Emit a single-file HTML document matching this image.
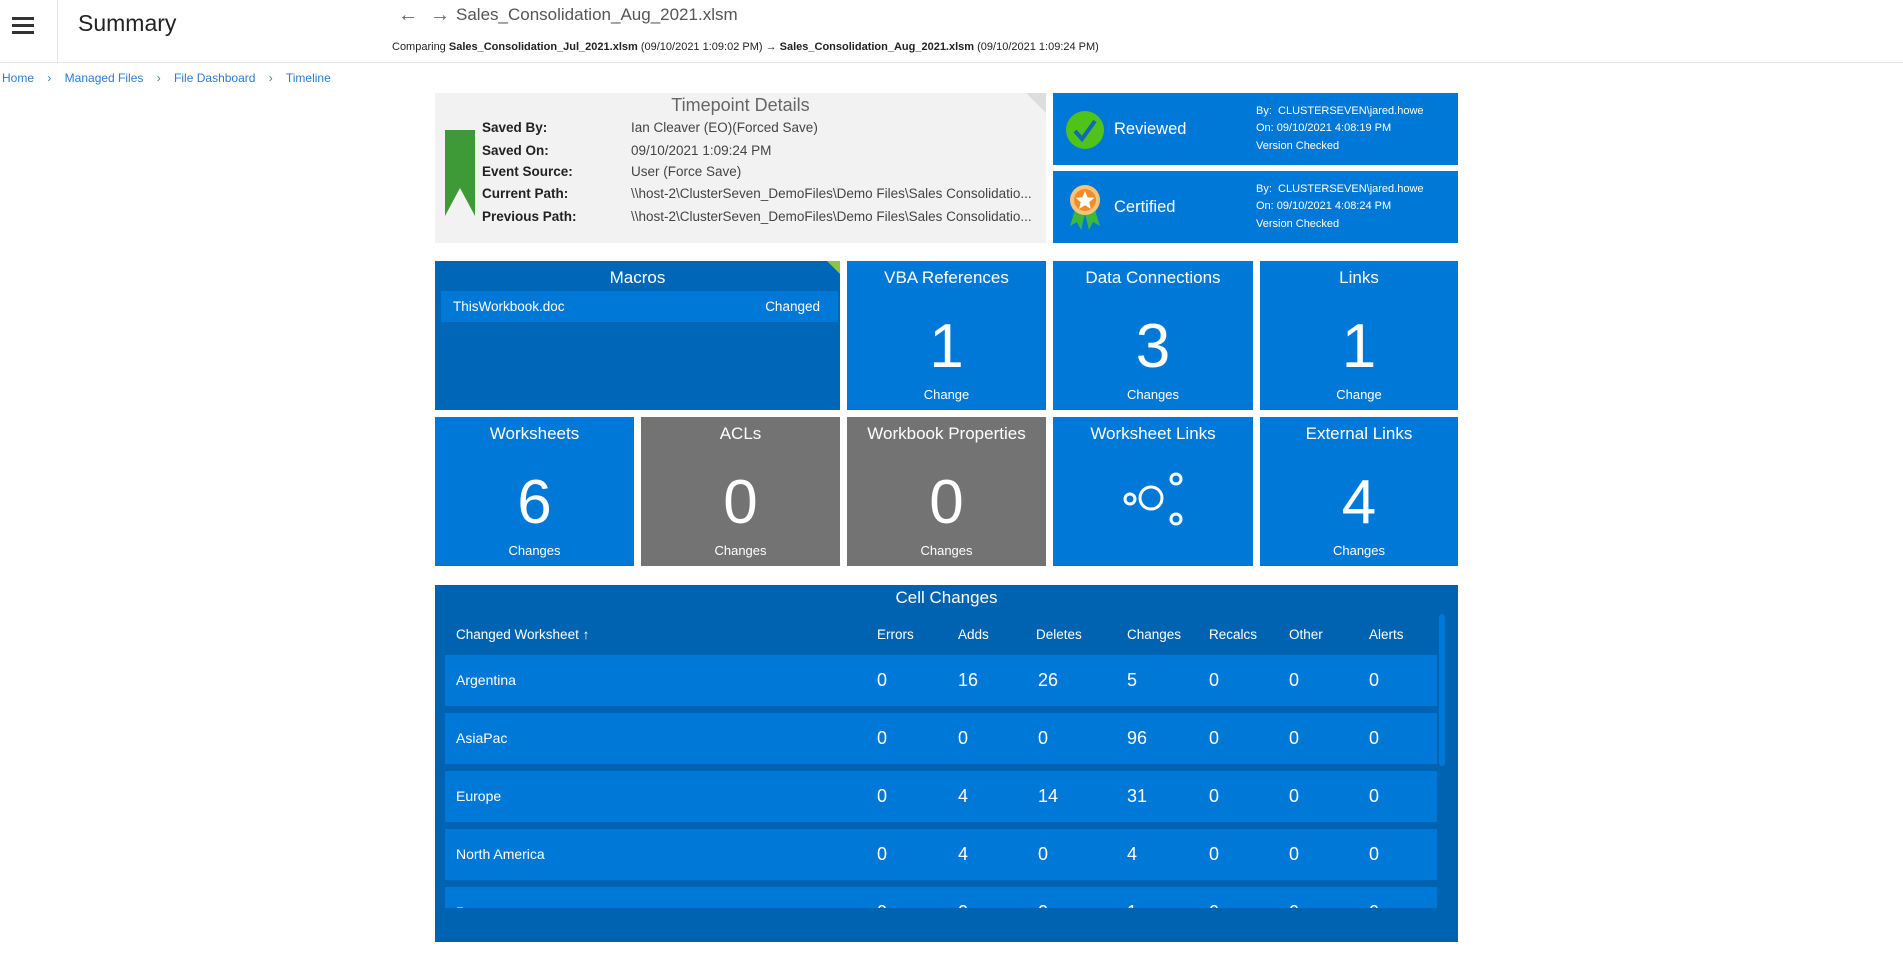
<!DOCTYPE html>
<html><head><meta charset="utf-8"><style>
*{margin:0;padding:0;box-sizing:border-box}
body{width:1903px;height:957px;background:#fff;font-family:"Liberation Sans",sans-serif;position:relative;overflow:hidden;color:#222}
.a{position:absolute}
.tile{position:absolute;background:#0078d7;color:#fff}
.tile .h{position:absolute;left:0;right:0;top:7px;text-align:center;font-size:17px}
.tile .n{position:absolute;left:0;right:0;top:50px;text-align:center;font-size:62px;font-weight:300}
.tile .c{position:absolute;left:0;right:0;bottom:8px;text-align:center;font-size:13px}
.row{position:absolute;left:445px;width:992px;height:51px;background:#0078d7;color:#fff;font-size:14px}
.row span{position:absolute;top:17px}
.row b{position:absolute;top:15px;font-weight:normal;font-size:18px}
.hd{position:absolute;top:627px;color:#fff;font-size:13.5px}
.lab{position:absolute;left:482px;font-weight:bold;font-size:13.5px;color:#222}
.val{position:absolute;left:631px;font-size:13.5px;color:#444;white-space:nowrap}
.sm{position:absolute;left:1256px;color:#fff;font-size:11px}
</style></head><body>
<div class="a" style="left:12px;top:17px;width:22px;height:3px;background:#333;box-shadow:0 7px 0 #333,0 14px 0 #333"></div>
<div class="a" style="left:57px;top:0;width:1px;height:62px;background:#e6e6e6"></div>
<div class="a" style="left:78px;top:10px;font-size:23px;color:#222">Summary</div>
<div class="a" style="left:398px;top:4px;font-size:20px;color:#666">&#8592;</div>
<div class="a" style="left:430px;top:4px;font-size:20px;color:#666">&#8594;</div>
<div class="a" style="left:456px;top:5px;font-size:17px;color:#555">Sales_Consolidation_Aug_2021.xlsm</div>
<div class="a" style="left:392px;top:41px;font-size:11px;color:#222;white-space:nowrap">Comparing <b>Sales_Consolidation_Jul_2021.xlsm</b> (09/10/2021 1:09:02 PM) &#8594; <b>Sales_Consolidation_Aug_2021.xlsm</b> (09/10/2021 1:09:24 PM)</div>
<div class="a" style="left:0;top:62px;width:1903px;height:1px;background:#e6e6e6"></div>
<div class="a" style="left:2px;top:71px;font-size:12px;color:#2b7cd3;white-space:pre">Home    &#8250;    Managed Files    &#8250;    File Dashboard    &#8250;    Timeline</div>
<div class="a" style="left:435px;top:93px;width:611px;height:150px;background:#f2f2f2"></div>
<div class="a" style="left:1026px;top:93px;width:0;height:0;border-left:20px solid transparent;border-top:20px solid #ddd"></div>
<div class="a" style="left:435px;top:95px;width:611px;text-align:center;font-size:18px;color:#666">Timepoint Details</div>
<svg class="a" style="left:445px;top:130px" width="30" height="86"><polygon points="0,0 30,0 30,86 15,58 0,86" fill="#3d9a37"/></svg>
<div class="lab" style="top:120px">Saved By:</div><div class="val" style="top:120px">Ian Cleaver (EO)(Forced Save)</div>
<div class="lab" style="top:143px">Saved On:</div><div class="val" style="top:143px">09/10/2021 1:09:24 PM</div>
<div class="lab" style="top:164px">Event Source:</div><div class="val" style="top:164px">User (Force Save)</div>
<div class="lab" style="top:186px">Current Path:</div><div class="val" style="top:186px">\\host-2\ClusterSeven_DemoFiles\Demo Files\Sales Consolidatio...</div>
<div class="lab" style="top:209px">Previous Path:</div><div class="val" style="top:209px">\\host-2\ClusterSeven_DemoFiles\Demo Files\Sales Consolidatio...</div>
<div class="a" style="left:1053px;top:93px;width:405px;height:72px;background:#0078d7"></div>
<svg class="a" style="left:1065px;top:110px" width="40" height="40"><circle cx="20" cy="20" r="19" fill="#4fc319"/><path d="M10 21 L17 29 L30 11" stroke="#0f68b8" stroke-width="4" fill="none"/></svg>
<div class="a" style="left:1114px;top:120px;font-size:16.5px;color:#fff">Reviewed</div>
<div class="sm" style="top:105px">By:&nbsp; CLUSTERSEVEN\jared.howe</div>
<div class="sm" style="top:122px">On: 09/10/2021 4:08:19 PM</div>
<div class="sm" style="top:140px">Version Checked</div>
<div class="a" style="left:1053px;top:171px;width:405px;height:72px;background:#0078d7"></div>
<svg class="a" style="left:1067px;top:184px" width="36" height="46"><polygon points="8,26 3,42 10,38 14,46 18,30" fill="#3cb93c"/><polygon points="28,26 33,42 26,38 22,46 18,30" fill="#3cb93c"/><circle cx="18" cy="16" r="15" fill="#f9c47a"/><circle cx="18" cy="16" r="11" fill="#f28c28"/><polygon points="18,7 20.6,13.4 27.5,13.8 22.2,18.2 23.9,24.9 18,21.2 12.1,24.9 13.8,18.2 8.5,13.8 15.4,13.4" fill="#fff"/></svg>
<div class="a" style="left:1114px;top:198px;font-size:16.5px;color:#fff">Certified</div>
<div class="sm" style="top:183px">By:&nbsp; CLUSTERSEVEN\jared.howe</div>
<div class="sm" style="top:200px">On: 09/10/2021 4:08:24 PM</div>
<div class="sm" style="top:218px">Version Checked</div>
<div class="tile" style="left:435px;top:261px;width:405px;height:149px;background:#0067b8">
 <div class="h">Macros</div>
 <div class="a" style="left:6px;top:30px;width:397px;height:31px;background:#0078d7;font-size:13.5px"><span class="a" style="left:12px;top:8px">ThisWorkbook.doc</span><span class="a" style="right:18px;top:8px">Changed</span></div>
 <div class="a" style="right:0;top:0;border-left:13px solid transparent;border-top:13px solid #8cc63f"></div>
</div>
<div class="tile" style="left:847px;top:261px;width:199px;height:149px"><div class="h">VBA References</div><div class="n">1</div><div class="c">Change</div></div>
<div class="tile" style="left:1053px;top:261px;width:200px;height:149px"><div class="h">Data Connections</div><div class="n">3</div><div class="c">Changes</div></div>
<div class="tile" style="left:1260px;top:261px;width:198px;height:149px"><div class="h">Links</div><div class="n">1</div><div class="c">Change</div></div>
<div class="tile" style="left:435px;top:417px;width:199px;height:149px"><div class="h">Worksheets</div><div class="n">6</div><div class="c">Changes</div></div>
<div class="tile" style="left:641px;top:417px;width:199px;height:149px;background:#737373"><div class="h">ACLs</div><div class="n">0</div><div class="c">Changes</div></div>
<div class="tile" style="left:847px;top:417px;width:199px;height:149px;background:#737373"><div class="h">Workbook Properties</div><div class="n">0</div><div class="c">Changes</div></div>
<div class="tile" style="left:1053px;top:417px;width:200px;height:149px"><div class="h">Worksheet Links</div>
 <svg class="a" style="left:65px;top:45px" width="70" height="70"><g fill="none" stroke="#fff" stroke-width="3"><circle cx="12" cy="37" r="5"/><circle cx="33" cy="36" r="11"/><circle cx="58" cy="17" r="5"/><circle cx="58" cy="57" r="5"/></g></svg></div>
<div class="tile" style="left:1260px;top:417px;width:198px;height:149px"><div class="h">External Links</div><div class="n">4</div><div class="c">Changes</div></div>
<div class="a" style="left:435px;top:585px;width:1023px;height:357px;background:#0063b1"></div>
<div class="a" style="left:435px;top:588px;width:1023px;text-align:center;color:#fff;font-size:17px">Cell Changes</div>
<div class="a" style="left:1439px;top:614px;width:6px;height:152px;border-radius:3px;background:#0078d7"></div>
<div class="hd" style="left:456px">Changed Worksheet &#8593;</div>
<div class="hd" style="left:877px">Errors</div><div class="hd" style="left:958px">Adds</div><div class="hd" style="left:1036px">Deletes</div><div class="hd" style="left:1127px">Changes</div><div class="hd" style="left:1209px">Recalcs</div><div class="hd" style="left:1289px">Other</div><div class="hd" style="left:1369px">Alerts</div>
<div class="row" style="top:655px"><span style="left:11px">Argentina</span><b style="left:432px">0</b><b style="left:513px">16</b><b style="left:593px">26</b><b style="left:682px">5</b><b style="left:764px">0</b><b style="left:844px">0</b><b style="left:924px">0</b></div>
<div class="row" style="top:713px"><span style="left:11px">AsiaPac</span><b style="left:432px">0</b><b style="left:513px">0</b><b style="left:593px">0</b><b style="left:682px">96</b><b style="left:764px">0</b><b style="left:844px">0</b><b style="left:924px">0</b></div>
<div class="row" style="top:771px"><span style="left:11px">Europe</span><b style="left:432px">0</b><b style="left:513px">4</b><b style="left:593px">14</b><b style="left:682px">31</b><b style="left:764px">0</b><b style="left:844px">0</b><b style="left:924px">0</b></div>
<div class="row" style="top:829px"><span style="left:11px">North America</span><b style="left:432px">0</b><b style="left:513px">4</b><b style="left:593px">0</b><b style="left:682px">4</b><b style="left:764px">0</b><b style="left:844px">0</b><b style="left:924px">0</b></div>
<div class="row" style="top:887px;height:21px;overflow:hidden"><span style="left:11px">P</span><b style="left:432px">0</b><b style="left:513px">0</b><b style="left:593px">0</b><b style="left:682px">1</b><b style="left:764px">0</b><b style="left:844px">0</b><b style="left:924px">0</b></div>
</body></html>
